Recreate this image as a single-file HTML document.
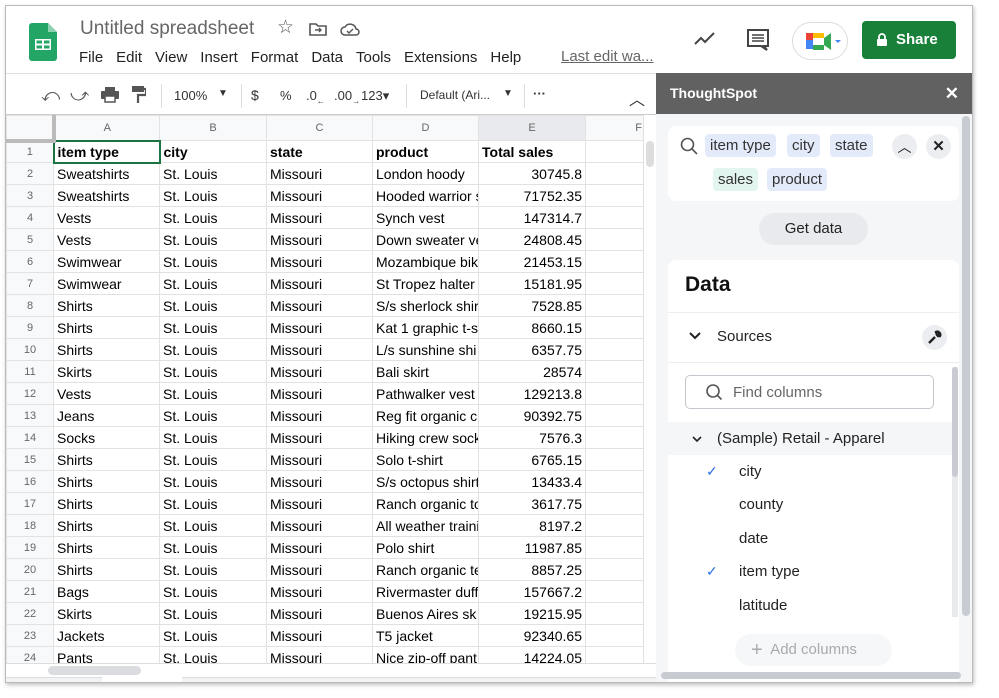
<!DOCTYPE html><html><head><style>
*{box-sizing:border-box;margin:0;padding:0}
body{width:999px;height:698px;background:#fff;font-family:"Liberation Sans",Arial,sans-serif;position:relative;overflow:hidden}
.win{position:absolute;left:5px;top:5px;width:968px;height:678px;border:1px solid #bbb;box-shadow:1px 2px 4px rgba(0,0,0,.25);background:#fff;overflow:hidden}
.a{position:absolute}
.menu span{margin-right:13px}
.tb{color:#333;font-size:13px}
table{border-collapse:collapse;position:absolute;left:0;top:109px;font-size:14px;table-layout:fixed;width:639px}
td{border:1px solid #e2e2e2;height:22px;padding:0 3px;white-space:nowrap;overflow:hidden;color:#000}
td.rh{background:#f8f9fa;color:#666;font-size:11px;text-align:center}
tr.ch td{background:#f8f9fa;color:#666;font-size:11px;text-align:center;height:25px}
td.n{text-align:right}
tr.b td{font-weight:bold}
.chip{position:absolute;height:23px;border-radius:4px;background:#e3ebfb;font-size:15px;color:#333;line-height:23px;padding:0 5px}
.fi{position:absolute;left:733px;font-size:15px;color:#222}
.ck{position:absolute;left:700px;color:#2e6ee6;font-size:14px}
</style></head><body>
<div class="win">
<svg class="a" style="left:23px;top:17px" width="28" height="38" viewBox="0 0 28 38"><path d="M3 0h16l9 9v26a3 3 0 0 1-3 3H3a3 3 0 0 1-3-3V3a3 3 0 0 1 3-3z" fill="#23a566"/><path d="M19 0v9h9z" fill="#8ed1b1"/><rect x="6" y="16" width="16" height="11" fill="#fff"/><rect x="7.5" y="17.5" width="5.5" height="3" fill="#23a566"/><rect x="15" y="17.5" width="5.5" height="3" fill="#23a566"/><rect x="7.5" y="22.5" width="5.5" height="3" fill="#23a566"/><rect x="15" y="22.5" width="5.5" height="3" fill="#23a566"/></svg>
<div class="a" style="left:74px;top:12px;font-size:19px;color:#666">Untitled spreadsheet</div>
<div class="a" style="left:271px;top:10px;font-size:19px;color:#555">☆</div>
<svg class="a" style="left:303px;top:16px" width="18" height="14"><path d="M1 2h6l2 2h8v9H1z" fill="none" stroke="#555" stroke-width="1.6"/><path d="M6 8h6M10 6l2 2-2 2" stroke="#555" fill="none" stroke-width="1.4"/></svg>
<svg class="a" style="left:334px;top:16px" width="20" height="14"><path d="M5 13a4 4 0 0 1 0-8a6 6 0 0 1 11 2a3 3 0 0 1 0 6z" fill="none" stroke="#555" stroke-width="1.5"/><path d="M7 9l2 2 4-4" stroke="#555" fill="none" stroke-width="1.4"/></svg>
<div class="a menu" style="left:73px;top:43px;font-size:15px;color:#222"><span>File</span><span>Edit</span><span>View</span><span>Insert</span><span>Format</span><span>Data</span><span>Tools</span><span>Extensions</span><span>Help</span></div>
<div class="a" style="left:555px;top:42px;font-size:15px;color:#666;text-decoration:underline">Last edit wa...</div>
<svg class="a" style="left:688px;top:25px" width="22" height="14"><path d="M1 13l6-6 4 4 9-9" fill="none" stroke="#444" stroke-width="2"/></svg>
<svg class="a" style="left:740px;top:22px" width="24" height="24"><path d="M2 2h20v16H18l3 4-6-4H2z" fill="none" stroke="#444" stroke-width="2"/><path d="M6 7h12M6 10h12M6 13h12" stroke="#444" stroke-width="1.6"/></svg>
<div class="a" style="left:786px;top:16px;width:56px;height:38px;border:1px solid #ddd;border-radius:19px"></div>
<svg class="a" style="left:800px;top:26px" width="36" height="20"><rect x="0" y="1" width="7" height="7" fill="#ea4335"/><rect x="0" y="8" width="7" height="9" fill="#4285f4"/><rect x="7" y="1" width="11" height="5" fill="#fbbc04"/><rect x="7" y="13" width="11" height="5" fill="#34a853"/><path d="M18 6l7-5v17l-7-5z" fill="#34a853"/><path d="M29 8h6l-3 3z" fill="#4285f4"/></svg>
<div class="a" style="left:856px;top:15px;width:94px;height:38px;background:#188038;border-radius:4px;color:#fff;font-weight:bold;font-size:15px;line-height:38px;padding-left:34px">Share</div>
<svg class="a" style="left:870px;top:27px" width="12" height="14"><path d="M3 6V4a3 3 0 0 1 6 0v2" fill="none" stroke="#fff" stroke-width="1.8"/><rect x="1" y="6" width="10" height="7" rx="1" fill="#fff"/></svg>
<div class="a" style="left:0;top:67px;width:650px;height:1px;background:#e0e0e0"></div>
<div class="a tb" style="left:35px;top:79px;font-size:18px;color:#555">⤺</div>
<div class="a tb" style="left:64px;top:79px;font-size:18px;color:#555">⤻</div>
<svg class="a" style="left:95px;top:81px" width="18" height="16"><rect x="4" y="0" width="10" height="4" fill="#555"/><rect x="0" y="4" width="18" height="8" rx="1" fill="#555"/><rect x="4" y="9" width="10" height="6" fill="#fff" stroke="#555" stroke-width="1.5"/></svg>
<svg class="a" style="left:126px;top:80px" width="14" height="18"><rect x="0" y="0" width="12" height="6" fill="#555"/><path d="M12 3h2v6H6v8" fill="none" stroke="#555" stroke-width="2.2"/></svg>
<div class="a" style="left:155px;top:78px;width:1px;height:24px;background:#ddd"></div>
<div class="a tb" style="left:168px;top:82px">100%</div><div class="a tb" style="left:212px;top:82px;font-size:10px">▼</div>
<div class="a" style="left:235px;top:78px;width:1px;height:24px;background:#ddd"></div>
<div class="a tb" style="left:245px;top:81px;font-size:14px">$</div>
<div class="a tb" style="left:274px;top:82px">%</div>
<div class="a tb" style="left:300px;top:82px">.0<sub style="font-size:8px">←</sub></div>
<div class="a tb" style="left:328px;top:82px">.00<sub style="font-size:8px">→</sub></div>
<div class="a tb" style="left:355px;top:82px">123▾</div>
<div class="a" style="left:400px;top:78px;width:1px;height:24px;background:#ddd"></div>
<div class="a tb" style="left:414px;top:82px;font-size:12px">Default (Ari...</div><div class="a tb" style="left:497px;top:82px;font-size:10px">▼</div>
<div class="a" style="left:518px;top:78px;width:1px;height:24px;background:#ddd"></div>
<div class="a tb" style="left:527px;top:80px;font-weight:bold">···</div>
<div class="a tb" style="left:623px;top:80px;font-size:16px">︿</div>
<div class="a" style="left:0;top:108px;width:650px;height:1px;background:#ccc"></div>
<table>
<colgroup><col style="width:47px"><col style="width:106px"><col style="width:107px"><col style="width:106px"><col style="width:106px"><col style="width:107px"><col style="width:60px"></colgroup>
<tr class="ch"><td style="border-right:4px solid #bbb;border-bottom:4px solid #bbb"></td><td>A</td><td>B</td><td>C</td><td>D</td><td style="background:#e8eaed">E</td><td style="text-align:right">F</td></tr>
<tr class="b"><td class="rh" style="font-weight:normal">1</td><td style="border:2px solid #1a7340">item type</td><td>city</td><td>state</td><td>product</td><td>Total sales</td><td></td></tr>
<tr><td class="rh">2</td><td>Sweatshirts</td><td>St. Louis</td><td>Missouri</td><td>London hoody</td><td class="n">30745.8</td><td></td></tr>
<tr><td class="rh">3</td><td>Sweatshirts</td><td>St. Louis</td><td>Missouri</td><td>Hooded warrior s</td><td class="n">71752.35</td><td></td></tr>
<tr><td class="rh">4</td><td>Vests</td><td>St. Louis</td><td>Missouri</td><td>Synch vest</td><td class="n">147314.7</td><td></td></tr>
<tr><td class="rh">5</td><td>Vests</td><td>St. Louis</td><td>Missouri</td><td>Down sweater ve</td><td class="n">24808.45</td><td></td></tr>
<tr><td class="rh">6</td><td>Swimwear</td><td>St. Louis</td><td>Missouri</td><td>Mozambique bik</td><td class="n">21453.15</td><td></td></tr>
<tr><td class="rh">7</td><td>Swimwear</td><td>St. Louis</td><td>Missouri</td><td>St Tropez halter</td><td class="n">15181.95</td><td></td></tr>
<tr><td class="rh">8</td><td>Shirts</td><td>St. Louis</td><td>Missouri</td><td>S/s sherlock shir</td><td class="n">7528.85</td><td></td></tr>
<tr><td class="rh">9</td><td>Shirts</td><td>St. Louis</td><td>Missouri</td><td>Kat 1 graphic t-s</td><td class="n">8660.15</td><td></td></tr>
<tr><td class="rh">10</td><td>Shirts</td><td>St. Louis</td><td>Missouri</td><td>L/s sunshine shi</td><td class="n">6357.75</td><td></td></tr>
<tr><td class="rh">11</td><td>Skirts</td><td>St. Louis</td><td>Missouri</td><td>Bali skirt</td><td class="n">28574</td><td></td></tr>
<tr><td class="rh">12</td><td>Vests</td><td>St. Louis</td><td>Missouri</td><td>Pathwalker vest</td><td class="n">129213.8</td><td></td></tr>
<tr><td class="rh">13</td><td>Jeans</td><td>St. Louis</td><td>Missouri</td><td>Reg fit organic c</td><td class="n">90392.75</td><td></td></tr>
<tr><td class="rh">14</td><td>Socks</td><td>St. Louis</td><td>Missouri</td><td>Hiking crew sock</td><td class="n">7576.3</td><td></td></tr>
<tr><td class="rh">15</td><td>Shirts</td><td>St. Louis</td><td>Missouri</td><td>Solo t-shirt</td><td class="n">6765.15</td><td></td></tr>
<tr><td class="rh">16</td><td>Shirts</td><td>St. Louis</td><td>Missouri</td><td>S/s octopus shirt</td><td class="n">13433.4</td><td></td></tr>
<tr><td class="rh">17</td><td>Shirts</td><td>St. Louis</td><td>Missouri</td><td>Ranch organic to</td><td class="n">3617.75</td><td></td></tr>
<tr><td class="rh">18</td><td>Shirts</td><td>St. Louis</td><td>Missouri</td><td>All weather traini</td><td class="n">8197.2</td><td></td></tr>
<tr><td class="rh">19</td><td>Shirts</td><td>St. Louis</td><td>Missouri</td><td>Polo shirt</td><td class="n">11987.85</td><td></td></tr>
<tr><td class="rh">20</td><td>Shirts</td><td>St. Louis</td><td>Missouri</td><td>Ranch organic te</td><td class="n">8857.25</td><td></td></tr>
<tr><td class="rh">21</td><td>Bags</td><td>St. Louis</td><td>Missouri</td><td>Rivermaster duff</td><td class="n">157667.2</td><td></td></tr>
<tr><td class="rh">22</td><td>Skirts</td><td>St. Louis</td><td>Missouri</td><td>Buenos Aires sk</td><td class="n">19215.95</td><td></td></tr>
<tr><td class="rh">23</td><td>Jackets</td><td>St. Louis</td><td>Missouri</td><td>T5 jacket</td><td class="n">92340.65</td><td></td></tr>
<tr><td class="rh">24</td><td>Pants</td><td>St. Louis</td><td>Missouri</td><td>Nice zip-off pant</td><td class="n">14224.05</td><td></td></tr>
</table>
<div class="a" style="left:637px;top:109px;width:13px;height:555px;background:#fff;border-left:1px solid #e0e0e0"></div>
<div class="a" style="left:640px;top:135px;width:8px;height:26px;background:#ddd;border-radius:4px"></div>
<div class="a" style="left:0;top:657px;width:650px;height:21px;background:#fff;border-top:1px solid #ddd"></div>
<div class="a" style="left:42px;top:660px;width:93px;height:9px;background:#dadce0;border-radius:5px"></div>
<div class="a" style="left:0;top:671px;width:650px;height:7px;background:#f1f3f4;border-top:1px solid #ddd"></div>
<div class="a" style="left:96px;top:671px;width:80px;height:7px;background:#fff"></div>
<div class="a" style="left:650px;top:67px;width:317px;height:611px;background:#f5f6f7"></div>
<div class="a" style="left:650px;top:67px;width:317px;height:41px;background:#616161;color:#fff;font-weight:bold;font-size:14px;line-height:41px;padding-left:14px">ThoughtSpot<span style="position:absolute;right:14px;font-size:17px">✕</span></div>
<div class="a" style="left:956px;top:110px;width:8px;height:500px;background:#c8ccd2;border-radius:4px"></div>
<div class="a" style="left:662px;top:120px;width:291px;height:75px;background:#fff;border-radius:8px"></div>
<svg class="a" style="left:674px;top:131px" width="18" height="18"><circle cx="7.5" cy="7.5" r="6" fill="none" stroke="#555" stroke-width="1.6"/><path d="M12 12l5 5" stroke="#555" stroke-width="1.6"/></svg>
<div class="chip" style="left:699px;top:128px">item type</div>
<div class="chip" style="left:781px;top:128px">city</div>
<div class="chip" style="left:824px;top:128px">state</div>
<div class="chip" style="left:707px;top:162px;background:#e2f5ee">sales</div>
<div class="chip" style="left:761px;top:162px">product</div>
<div class="a" style="left:886px;top:128px;width:25px;height:25px;border-radius:50%;background:#ebedf0;text-align:center;line-height:27px;font-size:14px;color:#222">︿</div>
<div class="a" style="left:920px;top:128px;width:25px;height:25px;border-radius:50%;background:#ebedf0;text-align:center;line-height:25px;font-size:15px;font-weight:bold;color:#222">✕</div>
<div class="a" style="left:753px;top:207px;width:109px;height:32px;border-radius:16px;background:#e8eaed;font-size:15px;color:#222;text-align:center;line-height:32px">Get data</div>
<div class="a" style="left:662px;top:254px;width:291px;height:424px;background:#fff;border-radius:8px 8px 0 0"></div>
<div class="a" style="left:679px;top:267px;font-size:21px;font-weight:bold;color:#111">Data</div>
<div class="a" style="left:662px;top:306px;width:291px;height:1px;background:#eee"></div>
<svg class="a" style="left:683px;top:326px" width="12" height="9"><path d="M1 1l5 5 5-5" fill="none" stroke="#222" stroke-width="2"/></svg>
<div class="a" style="left:711px;top:322px;font-size:15px;color:#222">Sources</div>
<div class="a" style="left:916px;top:319px;width:25px;height:25px;border-radius:50%;background:#ebedf0"></div>
<svg class="a" style="left:921px;top:324px" width="15" height="15"><path d="M2 13l6-6M9 2a3 3 0 0 1 4 4l-2 0-1-1z" stroke="#222" stroke-width="2.4" fill="#222"/></svg>
<div class="a" style="left:662px;top:356px;width:291px;height:1px;background:#eee"></div>
<div class="a" style="left:679px;top:369px;width:249px;height:34px;border:1px solid #c3c7cd;border-radius:5px"></div>
<svg class="a" style="left:700px;top:378px" width="17" height="17"><circle cx="7" cy="7" r="6" fill="none" stroke="#555" stroke-width="1.6"/><path d="M11.5 11.5l4 4" stroke="#555" stroke-width="1.6"/></svg>
<div class="a" style="left:727px;top:378px;font-size:15px;color:#666">Find columns</div>
<div class="a" style="left:662px;top:416px;width:284px;height:33px;background:#f5f6f7"></div>
<svg class="a" style="left:686px;top:430px" width="10" height="7"><path d="M1 1l4 4 4-4" fill="none" stroke="#222" stroke-width="1.6"/></svg>
<div class="a" style="left:711px;top:424px;font-size:15px;color:#222">(Sample) Retail - Apparel</div>
<div class="a" style="left:946px;top:361px;width:6px;height:250px;background:#e8eaed"></div>
<div class="a" style="left:946px;top:361px;width:6px;height:110px;background:#c8ccd2;border-radius:3px"></div>
<div class="ck" style="top:457px">✓</div><div class="fi" style="top:457px">city</div>
<div class="fi" style="top:490px">county</div>
<div class="fi" style="top:524px">date</div>
<div class="ck" style="top:557px">✓</div><div class="fi" style="top:557px">item type</div>
<div class="fi" style="top:591px">latitude</div>
<div class="a" style="left:729px;top:628px;width:157px;height:32px;border-radius:16px;background:#f6f7f8;color:#aaa;font-size:15px;line-height:32px;padding-left:16px"><span style="font-size:20px;vertical-align:-2px">+</span>&nbsp; Add columns</div>
<div class="a" style="left:655px;top:666px;width:300px;height:7px;background:#c8ccd2;border-radius:4px"></div>
</div>
</body></html>
